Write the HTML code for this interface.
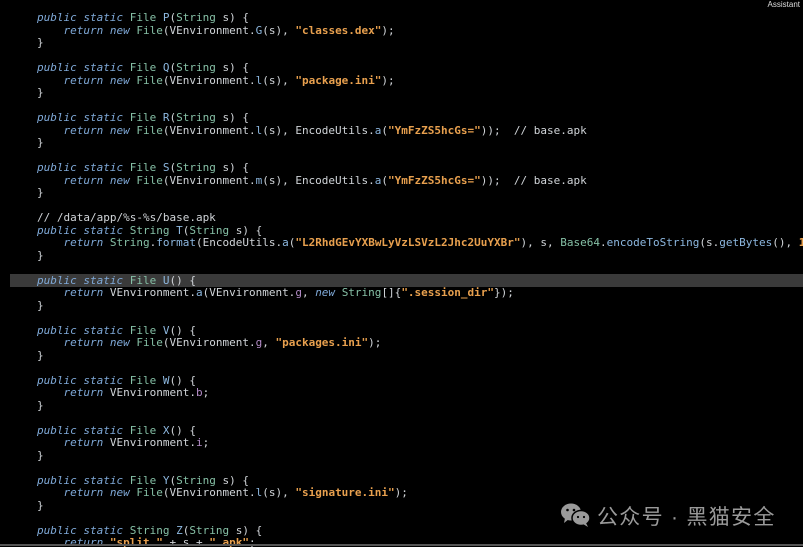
<!DOCTYPE html>
<html><head><meta charset="utf-8"><style>
html,body{margin:0;padding:0;background:#000;width:803px;height:547px;overflow:hidden;position:relative}
pre{margin:0;position:absolute;left:37px;top:12px;font-family:"DejaVu Sans Mono","Liberation Mono",monospace;font-size:11px;line-height:12.5px;color:#d0d4d8;white-space:pre}
.k{color:#7fa9d8;font-style:italic}
.t{color:#86c0a6}
.m{color:#8db8e0}
.s{color:#e8a04e;font-weight:bold}
.f{color:#b48cc8}
.hl{position:absolute;left:10px;top:274px;width:793px;height:13px;background:#3a3a3a}
.wx{position:absolute;left:560px;top:501px;font-family:"Liberation Sans","Noto Sans CJK SC",sans-serif;font-size:21px;color:#9a9a9a;letter-spacing:1.3px}
.bl{position:absolute;left:0;top:544px;width:803px;height:2px;background:#555}
.as{position:absolute;right:3px;top:0;font-family:"Liberation Sans",sans-serif;font-size:8px;color:#ddd}
</style></head><body>
<div class="hl"></div>
<pre><span class="k">public static</span> <span class="t">File</span> <span class="m">P</span>(<span class="t">String</span> s) {
    <span class="k">return new</span> <span class="t">File</span>(VEnvironment.<span class="m">G</span>(s), <span class="s">"classes.dex"</span>);
}

<span class="k">public static</span> <span class="t">File</span> <span class="m">Q</span>(<span class="t">String</span> s) {
    <span class="k">return new</span> <span class="t">File</span>(VEnvironment.<span class="m">l</span>(s), <span class="s">"package.ini"</span>);
}

<span class="k">public static</span> <span class="t">File</span> <span class="m">R</span>(<span class="t">String</span> s) {
    <span class="k">return new</span> <span class="t">File</span>(VEnvironment.<span class="m">l</span>(s), EncodeUtils.<span class="m">a</span>(<span class="s">"YmFzZS5hcGs="</span>));  // base.apk
}

<span class="k">public static</span> <span class="t">File</span> <span class="m">S</span>(<span class="t">String</span> s) {
    <span class="k">return new</span> <span class="t">File</span>(VEnvironment.<span class="m">m</span>(s), EncodeUtils.<span class="m">a</span>(<span class="s">"YmFzZS5hcGs="</span>));  // base.apk
}

// /data/app/%s-%s/base.apk
<span class="k">public static</span> <span class="t">String</span> <span class="m">T</span>(<span class="t">String</span> s) {
    <span class="k">return</span> <span class="t">String</span>.<span class="m">format</span>(EncodeUtils.<span class="m">a</span>(<span class="s">"L2RhdGEvYXBwLyVzLSVzL2Jhc2UuYXBr"</span>), s, <span class="t">Base64</span>.<span class="m">encodeToString</span>(s.<span class="m">getBytes</span>(), <span class="s">10</span>
}

<span class="k">public static</span> <span class="t">File</span> <span class="m">U</span>() {
    <span class="k">return</span> VEnvironment.<span class="m">a</span>(VEnvironment.<span class="f">g</span>, <span class="k">new</span> <span class="t">String</span>[]{<span class="s">".session_dir"</span>});
}

<span class="k">public static</span> <span class="t">File</span> <span class="m">V</span>() {
    <span class="k">return new</span> <span class="t">File</span>(VEnvironment.<span class="f">g</span>, <span class="s">"packages.ini"</span>);
}

<span class="k">public static</span> <span class="t">File</span> <span class="m">W</span>() {
    <span class="k">return</span> VEnvironment.<span class="f">b</span>;
}

<span class="k">public static</span> <span class="t">File</span> <span class="m">X</span>() {
    <span class="k">return</span> VEnvironment.<span class="f">i</span>;
}

<span class="k">public static</span> <span class="t">File</span> <span class="m">Y</span>(<span class="t">String</span> s) {
    <span class="k">return new</span> <span class="t">File</span>(VEnvironment.<span class="m">l</span>(s), <span class="s">"signature.ini"</span>);
}

<span class="k">public static</span> <span class="t">String</span> <span class="m">Z</span>(<span class="t">String</span> s) {
    <span class="k">return</span> <span class="s">"split_"</span> + s + <span class="s">".apk"</span>;
</pre>
<div class="as">Assistant</div>
<svg style="position:absolute;left:560px;top:502px" width="32" height="26" viewBox="0 0 32 26">
<ellipse cx="11" cy="10" rx="10" ry="8.5" fill="#9a9a9a"/>
<path d="M5 16 L4 21 L9 17Z" fill="#9a9a9a"/>
<ellipse cx="21" cy="16" rx="9" ry="7.5" fill="#9a9a9a" stroke="#000" stroke-width="1.5"/>
<path d="M26 21 L28 25 L23 22Z" fill="#9a9a9a"/>
<circle cx="7.5" cy="8" r="1.3" fill="#000"/><circle cx="14" cy="8" r="1.3" fill="#000"/>
<circle cx="18" cy="15" r="1.1" fill="#000"/><circle cx="24" cy="15" r="1.1" fill="#000"/>
</svg>
<div class="wx" style="left:597px">公众号 · 黑猫安全</div>
<div class="bl"></div>
</body></html>
